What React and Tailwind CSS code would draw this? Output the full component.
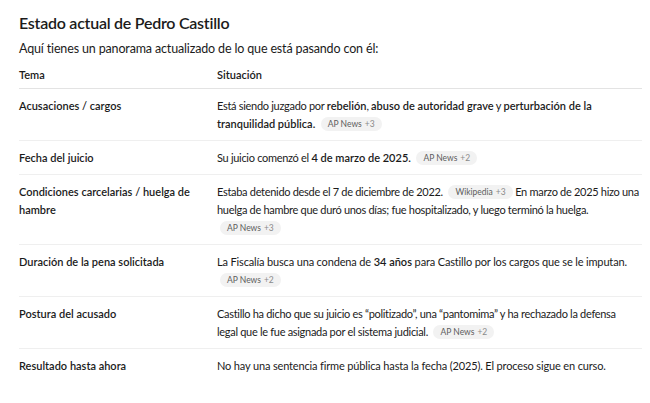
import React from "react";

function Chip({ label, more }) {
  return (
    <span className="inline-block ml-[3px] px-[7px] h-[14px] rounded-full bg-[#f2f2f2] text-[8.5px] leading-[14px] tracking-normal text-[#5d5d5d] whitespace-nowrap align-[1px]">
      {label}
      <span className="ml-[3px] text-[#8a8a8a]">{more}</span>
    </span>
  );
}

const B = ({ children }) => <b className="font-semibold tracking-normal">{children}</b>;

const rows = [
  {
    tema: "Acusaciones / cargos",
    body: (
      <>
        Está siendo juzgado por <B>rebelión</B>, <B>abuso de autoridad grave</B> y <B>perturbación de la</B>
        <br />
        <B>tranquilidad pública.</B> <Chip label="AP News" more="+3" />
      </>
    ),
  },
  {
    tema: "Fecha del juicio",
    body: (
      <>
        Su juicio comenzó el <B>4 de marzo de 2025.</B> <Chip label="AP News" more="+2" />
      </>
    ),
  },
  {
    tema: "Condiciones carcelarias / huelga de hambre",
    body: (
      <>
        Estaba detenido desde el 7 de diciembre de 2022. <Chip label="Wikipedia" more="+3" /> En marzo de 2025 hizo una
        <br />
        huelga de hambre que duró unos días; fue hospitalizado, y luego terminó la huelga.
        <br />
        <Chip label="AP News" more="+3" />
      </>
    ),
  },
  {
    tema: "Duración de la pena solicitada",
    body: (
      <span className="tracking-[-0.15px]">
        La Fiscalía busca una condena de <B>34 años</B> para Castillo por los cargos que se le imputan.
        <br />
        <Chip label="AP News" more="+2" />
      </span>
    ),
  },
  {
    tema: "Postura del acusado",
    body: (
      <>
        Castillo ha dicho que su juicio es “politizado”, una “pantomima” y ha rechazado la defensa
        <br />
        legal que le fue asignada por el sistema judicial. <Chip label="AP News" more="+2" />
      </>
    ),
  },
  {
    tema: "Resultado hasta ahora",
    body: (
      <span className="tracking-[-0.15px]">
        No hay una sentencia firme pública hasta la fecha (2025). El proceso sigue en curso.
      </span>
    ),
  },
];

export default function App() {
  return (
    <div className="w-[650px] h-[403px] bg-white overflow-hidden px-[19px] pt-[12px] text-[#1b1b1b] font-['Lato',sans-serif]">
      <h2 className="text-[16px] font-semibold leading-[22px] tracking-[-0.25px]">Estado actual de Pedro Castillo</h2>
      <p className="mt-[5px] text-[12.5px] leading-[20px] tracking-[-0.15px]">
        Aquí tienes un panorama actualizado de lo que está pasando con él:
      </p>
      <table className="mt-[7px] w-[623px] border-collapse text-left text-[11px] leading-[18px] tracking-[-0.3px]">
        <thead>
          <tr className="border-b border-[#e3e3e3]">
            <th className="w-[198px] pb-[4px] pr-4 font-semibold tracking-normal">Tema</th>
            <th className="pb-[4px] font-semibold tracking-normal">Situación</th>
          </tr>
        </thead>
        <tbody className="divide-y divide-[#efefef]">
          {rows.map((r, idx) => (
            <tr key={idx}>
              <td className="align-top py-[7.5px] pr-4 font-semibold tracking-normal">{r.tema}</td>
              <td className="align-top py-[7.5px] pr-0 whitespace-nowrap">{r.body}</td>
            </tr>
          ))}
        </tbody>
      </table>
    </div>
  );
}
